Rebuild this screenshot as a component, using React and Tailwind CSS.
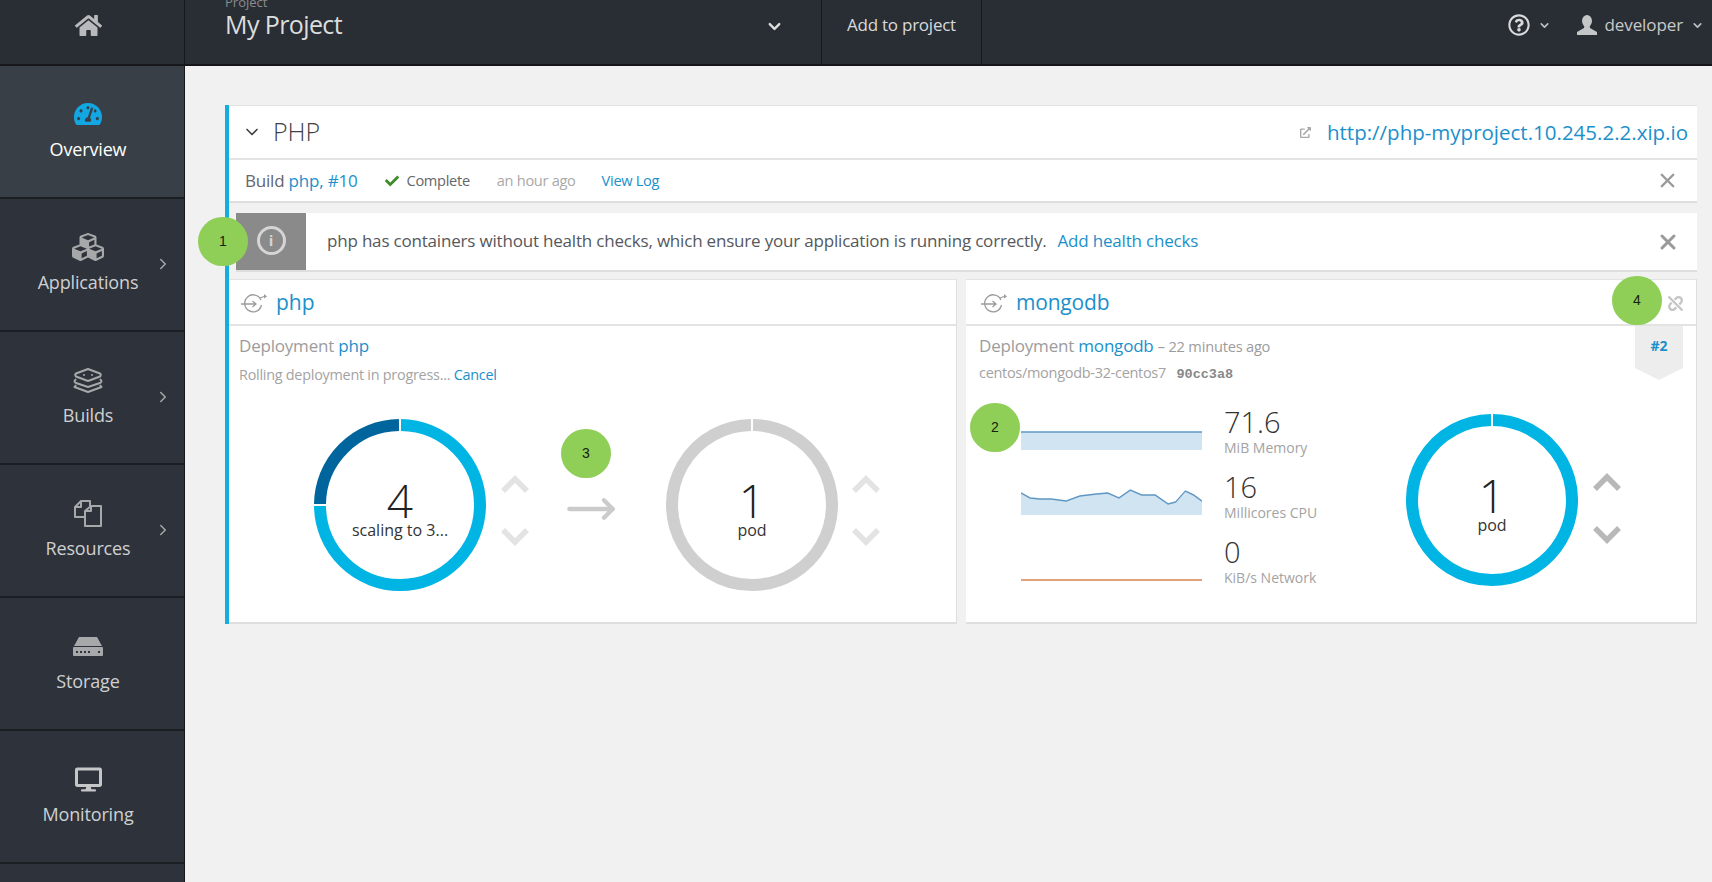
import { FaHome, FaTachometerAlt, FaCubes, FaDesktop, FaRegQuestionCircle, FaCheck, FaExternalLinkAlt, FaUnlink } from 'react-icons/fa'
import { ChevronDown, ChevronRight, X, MoveRight } from 'lucide-react'

const BLUE = 'text-[#1b90cb]'

function BuildsIcon() {
  return (
    <svg width="30" height="26" viewBox="0 0 30 26" fill="none" stroke="#a6a8aa" strokeWidth="2" strokeLinejoin="round">
      <path d="M15 2 L27 6.5 Q28.5 8 27 9.5 L15 14 L3 9.5 Q1.500 8 3 6.500 Z" />
      <path d="M3 12 L1.500 14 Q1.500 15.500 3 16 L15 20 L27 16 Q28.500 15.500 28.500 14 L27 12" />
      <path d="M3 18 L1.500 20 L15 25 L28.500 20 L27 18" />
      <circle cx="11" cy="8" r="1" fill="#a6a8aa" stroke="none" />
      <circle cx="19" cy="8" r="1" fill="#a6a8aa" stroke="none" />
    </svg>
  )
}

function ResourcesIcon() {
  return (
    <svg width="30" height="28" viewBox="0 0 30 28" fill="none" stroke="#a6a8aa" strokeWidth="2" strokeLinejoin="round">
      <path d="M11 18 H2 V8 L8 2 H17 V7" />
      <path d="M2 8 H8 V2" />
      <path d="M12 12 L18 7 H28 V27 H12 Z" />
      <path d="M12 12 H18 V7" />
    </svg>
  )
}

function StorageIcon() {
  return (
    <svg width="30" height="19" viewBox="0 0 30 19" fill="#a6a8aa">
      <path d="M6 0 H24 L29 9 H1 Z" />
      <rect x="0" y="10" width="30" height="9" rx="1" />
      <g fill="#2e333b">
        <rect x="3" y="14" width="2" height="2" />
        <rect x="7" y="14" width="2" height="2" />
        <rect x="11" y="14" width="2" height="2" />
        <rect x="15" y="14" width="2" height="2" />
        <rect x="25" y="14" width="2" height="2" />
      </g>
    </svg>
  )
}

function UserIcon() {
  return (
    <svg width="20" height="20" viewBox="0 0 20 20" fill="#c4c6c8">
      <ellipse cx="10" cy="6" rx="5" ry="6" />
      <path d="M7.500 10 H12.500 L13 13 L20 17 V20 H0 V17 L7 13 Z" />
    </svg>
  )
}

function DeploymentIcon() {
  return (
    <svg width="28" height="22" viewBox="0 0 28 22" fill="none" stroke="#9a9c9e" strokeWidth="1.300" className="shrink-0">
      <path d="M21 8 A8.500 8.500 0 1 0 21.500 13" />
      <path d="M1 12 H16 M12.500 9 L16 12 L12.500 15" />
      <path d="M20 6 L24 4.500" />
      <path d="M24 2 L27 4.500 L24 6.500 Z" fill="#9a9c9e" stroke="none" />
    </svg>
  )
}

function NavItem({ icon, label, active, more }) {
  return (
    <div className={`relative h-[133px] shrink-0 flex flex-col items-center justify-center pr-[8px] pb-[3px] border-b-2 border-[#1b1e23] ${active ? 'bg-[#393f46] text-white' : 'text-[#cfd0d1]'}`}>
      <div className="h-[30px] flex items-center justify-center">{icon}</div>
      <div className="mt-[8px] text-[18px] leading-6 tracking-[-0.15px]">{label}</div>
      {more && <ChevronRight size={18} strokeWidth={2} className="absolute right-[12px] top-[56px] text-[#a6a8aa]" />}
    </div>
  )
}

function Donut({ segments, value, label }) {
  return (
    <div className="relative w-[172px] h-[172px] shrink-0">
      <svg width="172" height="172" viewBox="0 0 172 172" fill="none" strokeWidth="12">
        {segments.map((s) => (
          <path key={s.d} d={s.d} stroke={s.color} />
        ))}
      </svg>
      <div className="absolute inset-0 flex flex-col items-center justify-center pt-[10px]">
        <div className="text-[46px] leading-[40px] font-light text-[#222]">{value}</div>
        <div className="text-[16px] leading-5 text-[#333]">{label}</div>
      </div>
    </div>
  )
}

const FULL = 'M87 6 A80 80 0 1 1 85 6'

function Scale({ color }) {
  return (
    <div className={`w-[30px] shrink-0 flex flex-col items-center gap-[35px] ${color}`}>
      <svg width="28" height="18" viewBox="0 0 28 18" fill="none" stroke="currentColor" strokeWidth="5.500">
        <path d="M2 16 L14 4 L26 16" />
      </svg>
      <svg width="28" height="18" viewBox="0 0 28 18" fill="none" stroke="currentColor" strokeWidth="5.500">
        <path d="M2 2 L14 14 L26 2" />
      </svg>
    </div>
  )
}

function Badge({ n, className }) {
  return (
    <div className={`absolute w-[50px] h-[49px] rounded-full bg-[#8fcf58] flex items-center justify-center text-[14px] text-[#18210f] font-['Liberation_Sans',sans-serif] ${className}`}>
      {n}
    </div>
  )
}

function Metric({ value, label, chart }) {
  return (
    <div className="flex h-[52px]">
      <svg width="181" height="52" viewBox="0 0 181 52" className="shrink-0">{chart}</svg>
      <div className="ml-[22px]">
        <div className="text-[29px] leading-8 font-light text-[#333]">{value}</div>
        <div className="text-[14px] leading-5 text-[#a3a3a3]">{label}</div>
      </div>
    </div>
  )
}

const CPU_LINE = 'M0 22 L12 27 L25 28 L40 28 L60 30 L78 25 L100 23 L115 22 L130 27 L145 19 L160 24 L178 24 L195 33 L205 31 L218 20 L229 24 L240 30'

export default function App() {
  return (
    <div className="relative h-[882px] overflow-hidden flex flex-col bg-[#f1f1f1] font-['Open_Sans',sans-serif]">
      {/* Top bar */}
      <header className="h-[66px] shrink-0 flex bg-[#292e34] border-b-2 border-[#15171a] text-[#d9dadb]">
        <div className="w-[185px] shrink-0 flex items-center justify-center pr-[8px] pb-[14px] border-r border-[#15171a]">
          <FaHome size={27} className="text-[#b9babb]" />
        </div>
        <div className="w-[637px] shrink-0 relative pl-[40px] border-r border-[#15171a]">
          <div className="text-[13px] leading-4 -mt-[6px] text-[#8a8c8f]">Project</div>
          <div className="text-[25px] leading-[30px] -mt-[1px] tracking-[-0.6px] text-[#dcdddd]">My Project</div>
          <ChevronDown size={19} strokeWidth={3} className="absolute right-[37px] top-[17px] text-[#dcdddd]" />
        </div>
        <div className="w-[160px] shrink-0 flex items-center justify-center pb-[14px] border-r border-[#15171a] text-[17px] tracking-[-0.25px]">
          Add to project
        </div>
        <div className="flex-1 flex items-center justify-end pr-[8px] pb-[14px]">
          <FaRegQuestionCircle size={22} className="text-[#d9dadb]" />
          <ChevronDown size={13} strokeWidth={3} className="ml-[8px] text-[#bfc0c1]" />
          <div className="ml-[26px]"><UserIcon /></div>
          <span className="ml-[8px] text-[17px] tracking-[-0.1px] text-[#c8c9ca]">developer</span>
          <ChevronDown size={13} strokeWidth={3} className="ml-[8px] text-[#bfc0c1]" />
        </div>
      </header>

      <div className="flex-1 flex min-h-0">
        {/* Sidebar */}
        <nav className="w-[185px] shrink-0 flex flex-col bg-[#2e333b] border-r border-[#15171a]">
          <NavItem active label="Overview" icon={<FaTachometerAlt size={28} className="text-[#12a7e2]" />} />
          <NavItem more label="Applications" icon={<FaCubes size={32} className="text-[#a6a8aa]" />} />
          <NavItem more label="Builds" icon={<BuildsIcon />} />
          <NavItem more label="Resources" icon={<ResourcesIcon />} />
          <NavItem label="Storage" icon={<StorageIcon />} />
          <NavItem label="Monitoring" icon={<FaDesktop size={27} className="text-[#c4c6c8]" />} />
        </nav>

        {/* Overview */}
        <main className="flex-1 min-w-0 pl-[40px] pr-[15px] pt-[39px]">
          <div className="relative border-l-4 border-[#12aee0]">
            {/* Service group header */}
            <div className="h-[55px] flex items-center bg-white border-t border-b-2 border-[#e3e3e3] pl-[13px] pr-[9px]">
              <ChevronDown size={20} strokeWidth={2} className="text-[#444]" />
              <span className="ml-[11px] text-[25px] font-light text-[#3f4145]">PHP</span>
              <FaExternalLinkAlt size={11} className="ml-auto text-[#a8a8a8]" />
              <span className={`ml-[16px] text-[20.5px] ${BLUE}`}>http://php-myproject.10.245.2.2.xip.io</span>
            </div>

            {/* Build row */}
            <div className="h-[43px] flex items-center bg-white border-b-2 border-[#dedede] pl-[16px] pr-[18px] text-[14.6px]">
              <span className="text-[17px] text-[#63666a] tracking-[-0.2px]">Build <span className={BLUE}>php, #10</span></span>
              <FaCheck size={14} className="ml-[28px] text-[#3f8a2a]" />
              <span className="ml-[7px] text-[#63666a] tracking-[-0.3px]">Complete</span>
              <span className="ml-[27px] text-[#a9a9a9] tracking-[-0.3px]">an hour ago</span>
              <span className={`ml-[26px] tracking-[-0.3px] ${BLUE}`}>View Log</span>
              <X size={23} strokeWidth={2.500} className="ml-auto text-[#9a9a9a]" />
            </div>

            {/* Health check alert */}
            <div className="mt-[10px] ml-[7px] h-[59px] flex items-center bg-white border-b-2 border-[#dedede] pr-[17px]">
              <div className="w-[70px] h-full shrink-0 bg-[#8a8a8a] flex items-center justify-center pb-[2px]">
                <div className="w-[29px] h-[29px] rounded-full border-[3px] border-[#d5d5d5] flex items-center justify-center text-[15px] font-bold text-[#d5d5d5]">i</div>
              </div>
              <span className="ml-[21px] -mt-[2px] text-[17px] tracking-[-0.19px] text-[#55585c]">php has containers without health checks, which ensure your application is running correctly.</span>
              <span className={`ml-[11px] -mt-[2px] text-[17px] tracking-[-0.19px] ${BLUE}`}>Add health checks</span>
              <X size={24} strokeWidth={3} className="ml-auto text-[#9a9a9a]" />
            </div>

            {/* Deployment panels */}
            <div className="mt-[7px] flex gap-[9px]">
              <section className="w-[728px] h-[345px] shrink-0 bg-white border-b-2 border-r border-[#dedede]">
                <div className="h-[47px] flex items-center pl-[11px] pt-[2px] border-t border-b-2 border-[#e3e3e3]">
                  <DeploymentIcon />
                  <span className={`ml-[8px] text-[21px] ${BLUE}`}>php</span>
                </div>
                <div className="pl-[10px] pt-[8px]">
                  <div className="text-[17px] leading-6 text-[#9c9c9c] tracking-[-0.2px]">Deployment <span className={BLUE}>php</span></div>
                  <div className="mt-[7px] text-[14.4px] leading-5 text-[#a3a3a3] tracking-[-0.25px]">Rolling deployment in progress... <span className={BLUE}>Cancel</span></div>
                </div>
                <div className="mt-[34px] ml-[85px] flex items-center">
                  <Donut
                    value="4"
                    label="scaling to 3..."
                    segments={[
                      { d: 'M87 6 A80 80 0 1 1 6 87', color: '#00b5e4' },
                      { d: 'M6 85 A80 80 0 0 1 85 6', color: '#00659c' },
                    ]}
                  />
                  <div className="ml-[14px] mt-[10px]"><Scale color="text-[#e3e3e3]" /></div>
                  <MoveRight size={52} strokeWidth={2} className="ml-[35px] mt-[8px] w-[52px] text-[#cbcbcb]" />
                  <div className="ml-[49px]">
                    <Donut value="1" label="pod" segments={[{ d: FULL, color: '#cfcfcf' }]} />
                  </div>
                  <div className="ml-[13px] mt-[10px]"><Scale color="text-[#e3e3e3]" /></div>
                </div>
              </section>

              <section className="relative flex-1 min-w-0 h-[345px] bg-white border-b-2 border-r border-[#dedede]">
                <div className="h-[47px] flex items-center pl-[14px] pr-[13px] pt-[2px] border-t border-b-2 border-[#e3e3e3]">
                  <DeploymentIcon />
                  <span className={`ml-[8px] text-[21px] tracking-[-0.2px] ${BLUE}`}>mongodb</span>
                  <FaUnlink size={15} className="ml-auto text-[#c5c5c5]" />
                </div>
                <div className="absolute right-[13px] top-[47px] w-[48px] h-[54px] bg-[#ededed] [clip-path:polygon(0_0,100%_0,100%_78%,50%_100%,0_78%)] flex justify-center pt-[9px] text-[14px] font-bold text-[#1b90cb]">
                  #2
                </div>
                <div className="pl-[13px] pt-[8px]">
                  <div className="text-[17px] leading-6 text-[#9c9c9c] tracking-[-0.2px]">
                    Deployment <span className={BLUE}>mongodb</span> <span className="text-[14.6px]">– 22 minutes ago</span>
                  </div>
                  <div className="mt-[5px] h-5 text-[14.5px] leading-5 text-[#a3a3a3] tracking-[-0.3px]">
                    centos/mongodb-32-centos7 <span className="ml-[7px] font-['Liberation_Mono',monospace] font-bold text-[13.500px] leading-none tracking-normal text-[#888]">90cc3a8</span>
                  </div>
                </div>
                <div className="mt-[23px] ml-[55px] flex items-start">
                  <div className="w-[385px] shrink-0 flex flex-col gap-[13px]">
                    <Metric
                      value="71.6"
                      label="MiB Memory"
                      chart={
                        <>
                          <rect x="0" y="26" width="181" height="18" fill="#d1e4f1" />
                          <path d="M0 26 H181" stroke="#5f97c4" strokeWidth="1.500" fill="none" />
                        </>
                      }
                    />
                    <Metric
                      value="16"
                      label="Millicores CPU"
                      chart={
                        <g transform="scale(0.754 1)">
                          <path d={`${CPU_LINE} V44 H0 Z`} fill="#d1e4f1" />
                          <path d={CPU_LINE} stroke="#5f97c4" strokeWidth="1.500" fill="none" />
                        </g>
                      }
                    />
                    <Metric
                      value="0"
                      label="KiB/s Network"
                      chart={<path d="M0 44 H181" stroke="#e0a47c" strokeWidth="2" fill="none" />}
                    />
                  </div>
                  <div className="mt-[8px]">
                    <Donut value="1" label="pod" segments={[{ d: FULL, color: '#00b5e4' }]} />
                  </div>
                  <div className="ml-[14px] mt-[67px]"><Scale color="text-[#b8b8b8]" /></div>
                </div>
              </section>
            </div>

            {/* Numbered callouts */}
            <Badge n="1" className="left-[-31px] top-[112px]" />
            <Badge n="2" className="left-[741px] top-[298px]" />
            <Badge n="3" className="left-[332px] top-[324px]" />
            <Badge n="4" className="left-[1383px] top-[171px]" />
          </div>
        </main>
      </div>
    </div>
  )
}
